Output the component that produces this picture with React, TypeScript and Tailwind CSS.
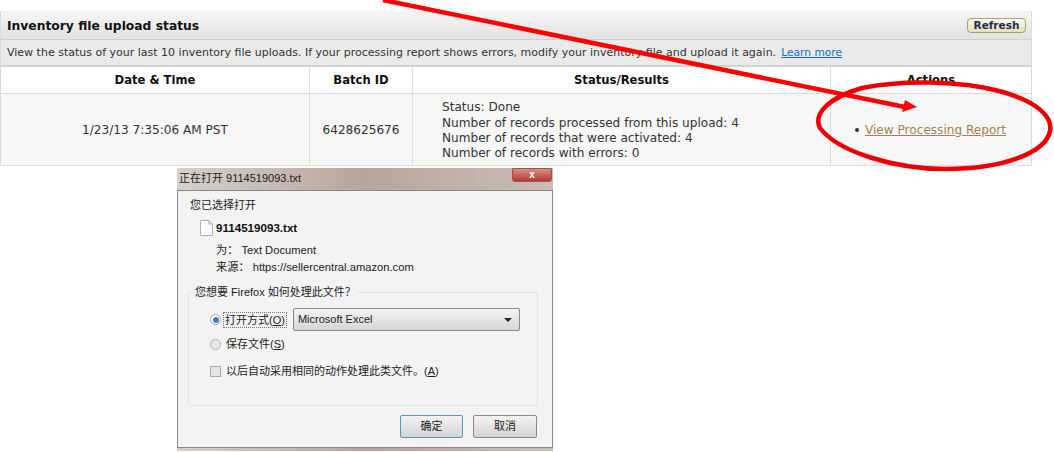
const cjk = "font-['Liberation_Sans','Noto_Sans_CJK_SC',sans-serif]";

const Annotations = () => (
  <svg className="absolute left-0 top-0 pointer-events-none" width="1054" height="452" viewBox="0 0 1054 452" fill="none">
    <path d="M383 0 L905 107" stroke="#ff0000" strokeWidth="4.5" />
    <path d="M905 100 L917 107 L902 112 Z" fill="#ff0000" />
    <path
      d="M862 88 C900 80 960 80 1003 92 C1036 102 1053 116 1050 131 C1046 152 1005 169 945 169 C895 169 838 152 820 128 C813 114 828 98 862 88 Z"
      stroke="#ee0000"
      strokeWidth="4.5"
    />
  </svg>
);

const Dialog = () => (
  <div className={`ml-[177px] mt-[2px] w-[376px] h-[283px] flex flex-col bg-gradient-to-r from-[#d6d1cb] via-[#b8a59b] to-[#c9bdb6] ${cjk}`}>
    <div className="h-[22px] flex items-start justify-between shrink-0">
      <span className="text-[11px] text-[#222] pl-[2px] pt-[2px]">正在打开 9114519093.txt</span>
      <div className="w-[40px] h-[14px] mr-[1px] rounded-b-[3px] bg-gradient-to-b from-[#d98a80] to-[#b8362e] border border-[#8d5a55] flex items-center justify-center text-white text-[10px] font-bold leading-none">
        x
      </div>
    </div>
    <div className="h-[258px] bg-[#f3f3f3] border border-[#8d8683] flex flex-col">
      <div className="pl-[12px] pt-[7px] text-[11px] text-[#222] leading-[14px]">您已选择打开</div>
      <div className="flex items-center gap-[3px] pl-[22px] mt-[8px] h-[16px]">
        <svg width="13" height="16" viewBox="0 0 13 16" fill="none">
          <path d="M0.5 0.5H9L12.5 4V15.5H0.5Z" fill="#fbfbfb" stroke="#a9b4bf" />
          <path d="M9 0.5V4H12.5" fill="#dfe6ec" stroke="#a9b4bf" />
        </svg>
        <span className="text-[11.6px] font-bold text-[#111]">9114519093.txt</span>
      </div>
      <div className="pl-[38px] mt-[6px] text-[11.2px] text-[#222] leading-[17px]">
        <div>为： Text Document</div>
        <div>来源： https://sellercentral.amazon.com</div>
      </div>
      <div className="relative ml-[10px] w-[350px] mt-[16px] h-[114px] border border-[#e2e2e2] rounded-[2px]">
        <span className="absolute left-[5px] -top-[8px] bg-[#f3f3f3] px-[1px] text-[11px] text-[#222] leading-[14px]">您想要 Firefox 如何处理此文件？</span>
        <div className="flex items-center pl-[21px] pt-[15px]">
          <span className="w-[11px] h-[11px] rounded-full border border-[#9aa5ad] bg-white flex items-center justify-center">
            <span className="w-[6px] h-[6px] rounded-full bg-[#3d7fb8]" />
          </span>
          <span className="ml-[2px] px-[1px] border border-dotted border-[#777] text-[11px] text-[#222] leading-[14px]">打开方式(<span className="underline">O</span>)</span>
          <div className="ml-[6px] w-[227px] h-[23px] border border-[#8a8a8a] rounded-[2px] bg-gradient-to-b from-[#f4f4f4] to-[#d6d6d6] flex items-center justify-between pl-[4px] pr-[7px] text-[11px] text-[#222]">
            Microsoft Excel
            <span className="w-0 h-0 border-x-[4px] border-x-transparent border-t-[4px] border-t-[#222]" />
          </div>
        </div>
        <div className="flex items-center pl-[21px] mt-[6px] h-[14px]">
          <span className="w-[11px] h-[11px] rounded-full border border-[#b0b0b0] bg-[#e8e8e8]" />
          <span className="ml-[5px] text-[11px] text-[#222]">保存文件(<span className="underline">S</span>)</span>
        </div>
        <div className="flex items-center pl-[21px] mt-[13px] h-[14px]">
          <span className="w-[11px] h-[11px] border border-[#a8a8a8] bg-[#e6e6e6]" />
          <span className="ml-[5px] text-[11px] text-[#222]">以后自动采用相同的动作处理此类文件。(<span className="underline">A</span>)</span>
        </div>
      </div>
      <div className="flex justify-end gap-[10px] pr-[15px] mt-[9px]">
        <button className="w-[63px] h-[23px] rounded-[2px] border border-[#4d9cc0] bg-gradient-to-b from-[#f3f3f3] to-[#d4d4d4] text-[11px] text-[#222]">确定</button>
        <button className="w-[64px] h-[23px] rounded-[2px] border border-[#8a8a8a] bg-gradient-to-b from-[#f3f3f3] to-[#d4d4d4] text-[11px] text-[#222]">取消</button>
      </div>
    </div>
  </div>
);

export default function App() {
  return (
    <div className="relative w-[1054px] h-[452px] overflow-hidden bg-white">
      <div className="pt-[11px]">
        <div className="w-[1032px] border-x border-b border-[#dcdcdc] font-['DejaVu_Sans',sans-serif] text-[#222]">
          <div className="h-[29px] flex items-center justify-between pl-[6px] pr-[5px] bg-gradient-to-b from-[#f6f6f6] to-[#e2e2e2] border-b border-[#cfcfcf]">
            <h3 className="text-[12.3px] font-bold text-[#111] pt-[2px]">Inventory file upload status</h3>
            <button className="h-[15px] w-[59px] rounded-[4px] border border-[#a8a26c] bg-gradient-to-b from-[#fdfbe8] to-[#e4dfb4] text-[10.5px] leading-none font-bold text-[#1b2a5c]">Refresh</button>
          </div>
          <div className="h-[27px] flex items-center pl-[6px] pt-[2px] bg-[#eaeaea] border-b-2 border-[#d4d4d4] text-[11px] text-[#333] whitespace-nowrap">
            View the status of your last 10 inventory file uploads. If your processing report shows errors, modify your inventory file and upload it again.
            <a className="ml-[5px] text-[10.7px] text-[#1a6fb5] underline">Learn more</a>
          </div>
          <div className="grid grid-cols-[309px_103px_418px_1fr] h-[27px] border-b border-[#dedede] text-[11.6px] font-bold text-[#111]">
            <div className="flex items-center justify-center border-r border-[#dedede] pt-[2px]">Date &amp; Time</div>
            <div className="flex items-center justify-center border-r border-[#dedede] pt-[2px]">Batch ID</div>
            <div className="flex items-center justify-center border-r border-[#dedede] pt-[2px]">Status/Results</div>
            <div className="flex items-center justify-center pt-[2px]">Actions</div>
          </div>
          <div className="grid grid-cols-[309px_103px_418px_1fr] h-[71px] bg-[#f7f7f7] text-[12.1px] text-[#333]">
            <div className="flex items-center justify-center pt-[1px] border-r border-[#dedede]">1/23/13 7:35:06 AM PST</div>
            <div className="flex items-center justify-center pt-[1px] border-r border-[#dedede]">6428625676</div>
            <div className="flex flex-col justify-center pl-[29px] pt-[3px] border-r border-[#dedede] leading-[15.3px]">
              <div>Status: Done</div>
              <div>Number of records processed from this upload: 4</div>
              <div>Number of records that were activated: 4</div>
              <div>Number of records with errors: 0</div>
            </div>
            <div className="flex items-center pl-[24px] pt-[1px]">
              <span className="w-[4px] h-[4px] rounded-full bg-[#333] mr-[6px]" />
              <a className="text-[#a5805a] underline">View Processing Report</a>
            </div>
          </div>
        </div>
        <Dialog />
      </div>
      <Annotations />
    </div>
  );
}
